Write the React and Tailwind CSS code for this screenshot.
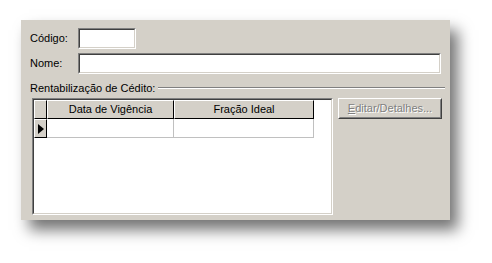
export default function App() {
  const sunken = 'border border-t-[#808080] border-l-[#808080] border-b-white border-r-white'
  const sunkenInner = 'border border-t-[#404040] border-l-[#404040] border-b-[#d4d0c8] border-r-[#d4d0c8] bg-white'

  return (
    <div className="w-[492px] h-[263px] bg-white overflow-hidden pt-[20px] pl-[21px]" style={{ fontFamily: '"Liberation Sans", Arial, sans-serif' }}>
      <div className="w-[429px] h-[200px] bg-[#d4d0c8] shadow-[8px_10px_14px_rgba(0,0,0,0.55)] pl-[9px] pt-[8px] text-[11px] text-black">
        <div className="flex items-center h-[21px]">
          <span className="w-[48px]">Código:</span>
          <div className={`${sunken} w-[58px] h-[21px]`}><div className={`${sunkenInner} h-full`} /></div>
        </div>
        <div className="flex items-center h-[21px] mt-[4px]">
          <span className="w-[48px]">Nome:</span>
          <div className={`${sunken} w-[363px] h-[21px]`}><div className={`${sunkenInner} h-full`} /></div>
        </div>
        <div className="flex items-center h-[14px] mt-[7px]">
          <span>Rentabilização de Cédito:</span>
          <div className="ml-[3px] w-[287px] h-[2px] border-t border-t-[#808080] border-b border-b-white" />
        </div>
        <div className="flex mt-[3px]">
          <div className={`${sunken} ml-[2px] w-[301px] h-[117px]`}>
            <div className={`${sunkenInner} h-full`}>
              <div className="flex h-[19px]">
                <div className="w-[13px] bg-[#d4d0c8] border-t border-l border-t-white border-l-white border-r border-b border-r-black border-b-black" />
                <div className="w-[127px] bg-[#d4d0c8] border-t border-l border-t-white border-l-white border-r border-b border-r-black border-b-black flex items-center justify-center">Data de Vigência</div>
                <div className="w-[140px] bg-[#d4d0c8] border-t border-l border-t-white border-l-white border-r border-b border-r-black border-b-black flex items-center justify-center">Fração Ideal</div>
              </div>
              <div className="flex h-[19px]">
                <div className="w-[13px] bg-[#d4d0c8] border-t border-l border-t-white border-l-white border-r border-b border-r-black border-b-black flex items-center justify-center">
                  <svg width="6" height="10" viewBox="0 0 6 10"><path d="M0 0 L6 5 L0 10 Z" fill="#000" /></svg>
                </div>
                <div className="w-[127px] border-r border-b border-[#c0c0c0]" />
                <div className="w-[140px] border-r border-b border-[#c0c0c0]" />
              </div>
            </div>
          </div>
          <div className="ml-[5px] w-[104px] h-[21px] border border-t-white border-l-white border-b-[#404040] border-r-[#404040]">
            <div className="h-full border border-t-[#d4d0c8] border-l-[#d4d0c8] border-b-[#808080] border-r-[#808080] flex items-center justify-center text-[#808080] [text-shadow:1px_1px_0_#fff]">
              <span><span className="underline">E</span>ditar/Detalhes...</span>
            </div>
          </div>
        </div>
      </div>
    </div>
  )
}
